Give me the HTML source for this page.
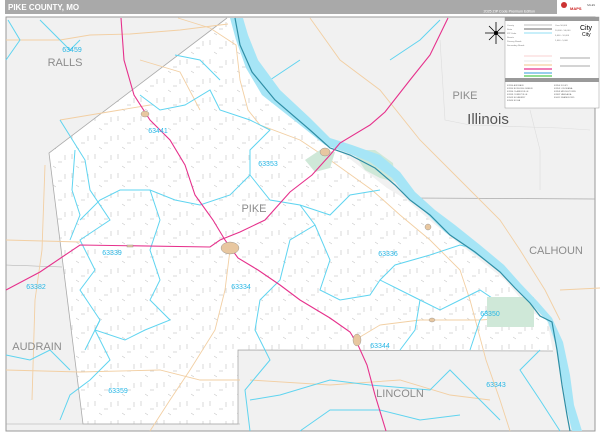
<!DOCTYPE html>
<html><head><meta charset="utf-8"><style>
html,body{margin:0;padding:0;width:600px;height:436px;overflow:hidden;background:#fff;font-family:"Liberation Sans",sans-serif}
</style></head><body>
<svg width="600" height="436" viewBox="0 0 600 436" xmlns="http://www.w3.org/2000/svg" font-family="Liberation Sans, sans-serif">
<defs>
<pattern id="rd" width="23" height="19" patternUnits="userSpaceOnUse">
<path d="M3,2 L3,7 M12,10 L16,10 M19,3 L19,8 M7,14 L10,16" stroke="#b5b5b5" stroke-width="0.5"/>
</pattern>
<clipPath id="cty"><path d="M227,18 L49,153 L83,424 L238,424 L238,350 L553,351 L547,320 L533,313 L505,280 L490,268 L433,223 L407,200 L387,188 L345,155 L312,130 L275,100 L252,70 L243,40 L238,18 Z"/></clipPath>
</defs>
<rect width="600" height="436" fill="#fff"/>
<!-- header -->
<rect x="5" y="0" width="595" height="14" fill="#a9a9a9"/>
<text x="8" y="10" font-size="8" font-weight="bold" fill="#fff">PIKE COUNTY, MO</text>
<text x="535" y="12.5" font-size="3.6" fill="#fff" text-anchor="end">2025 ZIP Code Premium Edition</text>
<rect x="557" y="0" width="43" height="14" fill="#fff"/>
<circle cx="564" cy="5" r="3" fill="#c33"/>
<text x="570" y="10" font-size="4" font-weight="bold" fill="#c22">MAPS</text>
<text x="587" y="6" font-size="2.5" fill="#555">SALES</text>
<!-- map frame -->
<rect x="6" y="17" width="589" height="414" fill="#f1f1f1" stroke="#999" stroke-width="1"/>
<!-- county white -->
<path d="M227,18 L49,153 L83,424 L238,424 L238,350 L553,351 L547,320 L533,313 L505,280 L490,268 L433,223 L407,200 L387,188 L345,155 L312,130 L275,100 L252,70 L243,40 L238,18 Z" fill="#fff"/>
<rect x="40" y="18" width="520" height="410" fill="url(#rd)" clip-path="url(#cty)"/>
<path d="M227,18 L49,153 L83,424 L238,424 L238,350 L553,351" fill="none" stroke="#aaa" stroke-width="0.8"/>
<!-- state line / county lines -->
<path d="M410,198 L595,199" stroke="#aaa" stroke-width="0.8" fill="none"/>
<path d="M6,265 L62,267" stroke="#aaa" stroke-width="0.6" fill="none"/>
<path d="M6,424 L240,424" stroke="#aaa" stroke-width="0.6"/>
<path d="M440,40 L445,120 L470,125 L560,128 L590,130 M530,110 L540,150 L540,190" stroke="#ddd" stroke-width="0.6" fill="none"/>
<!-- tan roads -->
<g fill="none" stroke="#f2cfa3" stroke-width="0.9">
<path d="M6,40 L60,40 L90,35 L130,34 L180,30 L228,24 M178,18 L210,28 L236,45 L240,80 L248,110 L260,125 L300,140 L330,160 L372,190 L400,215 L430,240 L460,270 L470,300 L478,330 L486,360 L500,400 L510,431"/>
<path d="M310,18 L340,60 L380,90 L420,140 L460,180 L500,220 L520,250 L545,290 L560,320"/>
<path d="M6,240 L80,242 M45,165 L42,250 L35,300 L32,400 M6,370 L80,372 L160,370 L200,380 L240,380"/>
<path d="M230,250 L225,290 L215,330 L190,370 L170,400 L150,431"/>
<path d="M355,340 L380,325 L420,320 L480,320 L510,318 M250,380 L330,385 L400,380 L450,395 L490,400 M560,290 L600,288"/>
<path d="M140,60 L180,72 L200,110 M60,120 L120,110 L150,105"/>
</g>
<!-- zip boundaries -->
<g fill="none" stroke="#5fd4f0" stroke-width="1">
<path d="M6,60 L20,40 L8,20 M40,20 L70,50 L80,40 M60,120 L85,160 L90,190 L110,220 L80,240 L95,270 L80,290 L100,320 L85,350"/>
<path d="M75,150 L72,190 L80,215 L70,240 M80,220 L100,200 L120,190 L150,190 L175,200 L200,205 L230,195 L250,175 L250,150 L270,130 L250,120 L220,110 L210,90 L185,105 L160,110 L140,95"/>
<path d="M150,190 L160,220 L150,250 L160,280 L150,300 L170,320 L145,330 L125,340 L95,330 L100,320"/>
<path d="M250,175 L270,200 L300,205 L315,225 L290,240 L280,280 L260,300 L255,330 L270,360 L245,390 L250,431"/>
<path d="M300,205 L330,215 L350,195 L380,190 M315,225 L330,260 L320,290 L340,300 L370,295 L380,280 L400,290 L420,300 L440,310 L460,300 L480,290 L495,300 L480,320 L470,350"/>
<path d="M420,300 L415,330 L400,350 M380,280 L395,265 L430,255 L460,245 L480,250"/>
<path d="M95,330 L110,360 L90,380 L70,395 L60,420 M6,355 L30,360 L50,350 L70,370"/>
<path d="M250,400 L280,395 L330,380 L370,385 L430,390 L450,370 L470,390 L500,420 M300,431 L330,410 L380,410 L420,420 L460,415 M540,350 L520,370 L540,400 L560,431"/>
<path d="M390,60 L420,40 L440,20 M270,80 L300,60 M175,55 L200,60 L220,80"/>
</g>
<!-- green areas -->
<path d="M352,150 L375,150 L393,163 L395,182 L380,178 L365,170 Z" fill="#cfe8d8"/>
<path d="M305,160 L320,150 L335,152 L330,168 L315,172 Z" fill="#cfe8d8"/>
<rect x="487" y="297" width="47" height="30" fill="#cfe8d8"/>
<!-- river -->
<path d="M230,18 L236,40 L246,68 L262,95 L300,125 L325,145 L345,152 L370,162 L392,178 L405,195 L425,212 L445,232 L470,250 L498,270 L515,288 L535,308 L548,322 L556,345 L562,380 L567,410 L572,431 L582,431 L574,405 L570,375 L563,342 L552,318 L538,302 L520,283 L504,265 L480,245 L455,225 L435,210 L415,192 L400,172 L380,155 L352,145 L330,138 L310,118 L280,90 L258,60 L248,35 L243,18 Z" fill="#a6e5f6"/>
<path d="M235,18 L240,45 L252,72 L275,100 L310,130 L330,148 L350,155 L375,168 L395,185 L410,200 L430,215 L450,235 L475,252 L500,272 L515,288 L530,303 L540,316 L552,322 L557,350 L562,385 L567,415 L570,431" fill="none" stroke="#2f8ea5" stroke-width="1.2"/>
<!-- highways -->
<g fill="none" stroke="#e6318c" stroke-width="1.1">
<path d="M121,18 L124,60 L134,95 L150,120 L170,140 L185,165 L195,195 L213,220 L225,240 L238,258 L258,270 L280,285 L300,300 L330,318 L350,332 L358,345 L367,365 L375,395 L386,431"/>
<path d="M6,290 L40,272 L80,245 L210,247 L220,240 L240,232 L265,220 L290,192 L312,175 L330,155 L340,143 L370,125 L385,112 L410,80 L430,55 L448,18"/>
</g>
<!-- towns -->
<g fill="#e8c7a0" stroke="#888" stroke-width="0.4">
<ellipse cx="230" cy="248" rx="9" ry="6"/>
<ellipse cx="325" cy="152" rx="5" ry="4"/>
<ellipse cx="428" cy="227" rx="3" ry="3"/>
<ellipse cx="357" cy="340" rx="4" ry="6"/>
<ellipse cx="432" cy="320" rx="3" ry="2"/>
<ellipse cx="145" cy="114" rx="4" ry="3"/>
<rect x="127" y="245" width="6" height="2"/>
</g>
<!-- labels -->
<g font-size="11" fill="#8c8c8c" text-anchor="middle">
<text x="65" y="66">RALLS</text>
<text x="465" y="99">PIKE</text>
<text x="254" y="212">PIKE</text>
<text x="556" y="254">CALHOUN</text>
<text x="37" y="350">AUDRAIN</text>
<text x="400" y="397">LINCOLN</text>
</g>
<text x="488" y="124" font-size="15" fill="#555" text-anchor="middle">Illinois</text>
<g font-size="7" fill="#27b7e6" text-anchor="middle">
<text x="72" y="52">63459</text>
<text x="158" y="133">63441</text>
<text x="268" y="166">63353</text>
<text x="388" y="256">63336</text>
<text x="112" y="255">63339</text>
<text x="36" y="289">63382</text>
<text x="241" y="289">63334</text>
<text x="490" y="316">63350</text>
<text x="380" y="348">63344</text>
<text x="118" y="393">63359</text>
<text x="496" y="387">63343</text>
</g>
<!-- compass -->
<g stroke="#000" stroke-width="0.8">
<path d="M496,22 L496,44 M485,33 L507,33 M489,26 L503,40 M503,26 L489,40"/>
</g>
<circle cx="496" cy="33" r="2" fill="#000"/>
<!-- legend -->
<rect x="505" y="17" width="94" height="91" fill="#fff" stroke="#999" stroke-width="0.5"/>
<rect x="505" y="17" width="94" height="4" fill="#9a9a9a"/>
<g stroke-width="1.3">
<line x1="524" y1="25" x2="552" y2="25" stroke="#ccc"/>
<line x1="524" y1="29" x2="552" y2="29" stroke="#888"/>
<line x1="524" y1="33" x2="552" y2="33" stroke="#a6e5f6"/>
<line x1="524" y1="56" x2="552" y2="56" stroke="#fbdada"/>
<line x1="524" y1="61" x2="552" y2="61" stroke="#eee"/>
<line x1="524" y1="65" x2="552" y2="65" stroke="#f5cfa0"/>
<line x1="524" y1="69" x2="552" y2="69" stroke="#e6318c"/>
<line x1="524" y1="73" x2="552" y2="73" stroke="#5ab0e0"/>
<line x1="524" y1="76" x2="552" y2="76" stroke="#55cc55"/>
</g>
<g fill="#777" font-size="2.2">
<text x="507" y="26">County</text><text x="507" y="30">State</text><text x="507" y="34">ZIP Code</text><text x="507" y="38">Streets</text><text x="507" y="42">Primary Roads</text><text x="507" y="46">Secondary Roads</text>
<text x="555" y="26">Over 50,000</text><text x="555" y="31">10,000 - 50,000</text><text x="555" y="36">5,000 - 10,000</text><text x="555" y="41">1,000 - 5,000</text>
</g>
<path d="M560,58 L590,58 M560,66 L590,66" stroke="#555" stroke-width="0.5"/>
<text x="580" y="30" font-size="7" fill="#000">City</text>
<text x="582" y="36" font-size="5" fill="#000">City</text>
<rect x="505" y="78" width="94" height="4" fill="#9a9a9a"/>
<g fill="#666" font-size="2.2">
<text x="507" y="86">63330 AUDRAIN</text><text x="507" y="89">63334 BOWLING GREEN</text><text x="507" y="92">63336 CLARKSVILLE</text><text x="507" y="95">63339 CURRYVILLE</text><text x="507" y="98">63343 ELSBERRY</text><text x="507" y="101">63344 EOLIA</text>
<text x="554" y="86">63350 FOLEY</text><text x="554" y="89">63353 LOUISIANA</text><text x="554" y="92">63359 MIDDLETOWN</text><text x="554" y="95">63382 VANDALIA</text><text x="554" y="98">63441 FRANKFORD</text>
</g>
</svg>
</body></html>
